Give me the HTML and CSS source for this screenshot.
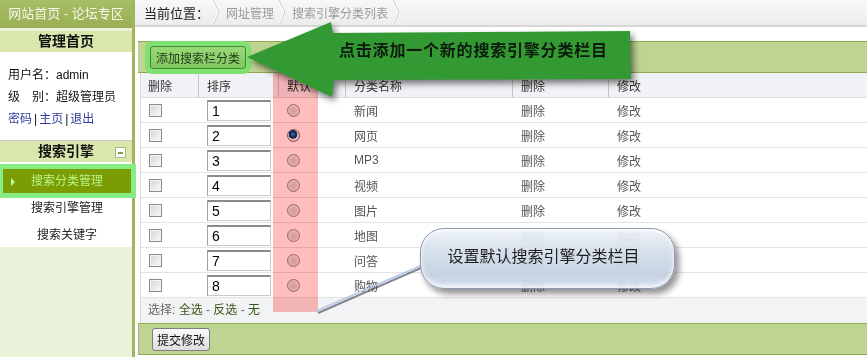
FILE: index.html
```html
<!DOCTYPE html>
<html lang="zh-CN">
<head>
<meta charset="utf-8">
<title>搜索引擎分类列表</title>
<link rel="stylesheet" href="styles.css">
</head>
<body>
<div class="page">
  <aside class="sidebar">
    <div class="site-top">网站首页 - 论坛专区</div>
    <section class="box">
      <div class="box-title">管理首页</div>
      <div class="user">
        <p>用户名：admin</p>
        <p>级　别：超级管理员</p>
        <p><a class="ulink">密码</a>|<a class="ulink">主页</a>|<a class="ulink">退出</a></p>
      </div>
    </section>
    <section class="box menu">
      <div class="box-title">搜索引擎<span class="toggle"></span></div>
      <ul class="menu-list">
        <li class="active">搜索分类管理</li>
        <li>搜索引擎管理</li>
        <li>搜索关键字</li>
      </ul>
    </section>
  </aside>

  <main class="main">
    <nav class="crumbs">
      <span class="crumb-label">当前位置：</span>
      <svg class="chev" width="8" height="25" viewBox="0 0 8 25"><polyline points="1,0 7,12.5 1,25" fill="none" stroke="#c9c9c9" stroke-width="1"/><polyline points="0,0 6,12.5 0,25" fill="none" stroke="#ffffff" stroke-width="1"/></svg>
      <span class="crumb">网址管理</span>
      <svg class="chev" width="8" height="25" viewBox="0 0 8 25"><polyline points="1,0 7,12.5 1,25" fill="none" stroke="#c9c9c9" stroke-width="1"/><polyline points="0,0 6,12.5 0,25" fill="none" stroke="#ffffff" stroke-width="1"/></svg>
      <span class="crumb">搜索引擎分类列表</span>
      <svg class="chev" width="8" height="25" viewBox="0 0 8 25"><polyline points="1,0 7,12.5 1,25" fill="none" stroke="#c9c9c9" stroke-width="1"/><polyline points="0,0 6,12.5 0,25" fill="none" stroke="#ffffff" stroke-width="1"/></svg>
    </nav>

    <div class="content">
      <div class="toolbar top-bar">
        <button class="btn-add">添加搜索栏分类</button>
      </div>

      <div class="grid">
        <div class="row head">
          <div class="cell">删除</div>
          <div class="cell">排序</div>
          <div class="cell">默认</div>
          <div class="cell">分类名称</div>
          <div class="cell">删除</div>
          <div class="cell">修改</div>
        </div>
        <div class="row"><div class="cell"><span class="cb"></span></div><div class="cell"><span class="num">1</span></div><div class="cell"><span class="radio"></span></div><div class="cell">新闻</div><div class="cell">删除</div><div class="cell">修改</div></div>
        <div class="row"><div class="cell"><span class="cb"></span></div><div class="cell"><span class="num">2</span></div><div class="cell"><span class="radio on"></span></div><div class="cell">网页</div><div class="cell">删除</div><div class="cell">修改</div></div>
        <div class="row"><div class="cell"><span class="cb"></span></div><div class="cell"><span class="num">3</span></div><div class="cell"><span class="radio"></span></div><div class="cell">MP3</div><div class="cell">删除</div><div class="cell">修改</div></div>
        <div class="row"><div class="cell"><span class="cb"></span></div><div class="cell"><span class="num">4</span></div><div class="cell"><span class="radio"></span></div><div class="cell">视频</div><div class="cell">删除</div><div class="cell">修改</div></div>
        <div class="row"><div class="cell"><span class="cb"></span></div><div class="cell"><span class="num">5</span></div><div class="cell"><span class="radio"></span></div><div class="cell">图片</div><div class="cell">删除</div><div class="cell">修改</div></div>
        <div class="row"><div class="cell"><span class="cb"></span></div><div class="cell"><span class="num">6</span></div><div class="cell"><span class="radio"></span></div><div class="cell">地图</div><div class="cell">删除</div><div class="cell">修改</div></div>
        <div class="row"><div class="cell"><span class="cb"></span></div><div class="cell"><span class="num">7</span></div><div class="cell"><span class="radio"></span></div><div class="cell">问答</div><div class="cell">删除</div><div class="cell">修改</div></div>
        <div class="row"><div class="cell"><span class="cb"></span></div><div class="cell"><span class="num">8</span></div><div class="cell"><span class="radio"></span></div><div class="cell">购物</div><div class="cell">删除</div><div class="cell">修改</div></div>
        <div class="select-row">选择: <a class="sel">全选</a> - <a class="sel">反选</a> - <a class="sel">无</a></div>
      </div>

      <div class="toolbar bottom-bar">
        <button class="btn-submit">提交修改</button>
      </div>
    </div>
  </main>

  <!-- annotations drawn over the page -->
  <div class="hl-column"></div>
  <svg class="annot" width="867" height="357" viewBox="0 0 867 357">
    <polygon class="arrow" points="247,57 331,22 333,33 630,31 631,79 334,80 332,97"/>
    <line class="pointer-shadow" x1="421" y1="268" x2="318" y2="313"/>
    <line class="pointer" x1="420" y1="266" x2="316" y2="311"/>
  </svg>
  <div class="arrow-text">点击添加一个新的搜索引擎分类栏目</div>
  <div class="bubble">设置默认搜索引擎分类栏目</div>
</div>
</body>
</html>
```

FILE: styles.css
```css
* { box-sizing: border-box; }

body {
  margin: 0;
  font-family: "Liberation Sans", "Noto Sans CJK SC", sans-serif;
  font-size: 12px;
  color: #333;
  background: #fff;
}

.page {
  position: relative;
  display: flex;
  width: 867px;
  height: 357px;
  overflow: hidden;
}

/* ---------- sidebar ---------- */
.sidebar {
  width: 135px;
  flex: none;
  background: #eaf2da;
  border-right: 3px solid #a2b55c;
}

.site-top {
  height: 28px;
  line-height: 28px;
  background: linear-gradient(#a8be68, #98b052);
  color: #f4f8ea;
  font-size: 13px;
  text-align: center;
}

.box-title {
  position: relative;
  height: 21px;
  line-height: 21px;
  background: #d9e7ad;
  color: #111;
  font-size: 14px;
  font-weight: bold;
  text-align: center;
}

.box:first-of-type .box-title { margin-top: 3px; }

.user {
  background: #fff;
  padding: 12px 0 10px 8px;
  line-height: 22px;
  font-size: 12px;
  color: #111;
  border-bottom: 1px solid #c9cfbd;
}

.user p { margin: 0; }

.ulink { color: #2f3b9a; margin: 0 2px; }
.ulink:first-child { margin-left: 0; }

.toggle {
  position: absolute;
  right: 6px;
  top: 6px;
  width: 11px;
  height: 11px;
  background: #fff;
  border: 1px solid #a9b983;
}
.toggle::after {
  content: "";
  position: absolute;
  left: 2px;
  right: 2px;
  top: 4px;
  height: 2px;
  background: #7f9f3a;
}

.menu-list {
  list-style: none;
  margin: 0;
  padding: 7px 0 0;
  background: #fff;
}

.menu-list li {
  height: 24px;
  line-height: 24px;
  margin: 0 1px 3px 3px;
  text-align: center;
  font-size: 12px;
  color: #222;
}

.menu-list li.active {
  position: relative;
  background: #7b9c02;
  color: #b6f58a;
  box-shadow: 0 0 0 5px #86ec86;
}
.menu-list li.active::before {
  content: "";
  position: absolute;
  left: 8px;
  top: 9px;
  border-left: 4px solid #b8ffb0;
  border-top: 4px solid transparent;
  border-bottom: 4px solid transparent;
}

/* ---------- main ---------- */
.main {
  flex: 1;
  min-width: 0;
  background: #fff;
}

.crumbs {
  display: flex;
  align-items: center;
  height: 27px;
  padding-left: 9px;
  background: linear-gradient(#f8f8f8, #ececec);
  border-bottom: 2px solid #d6d6d6;
}

.crumb-label { font-size: 13px; color: #222; margin-right: 2px; }
.chev { display: block; margin: 0 6px 0 1px; }
.crumb { font-size: 12px; color: #9a9a9a; margin-right: 3px; }

.content { padding: 14px 0 0 3px; }

.toolbar {
  display: flex;
  align-items: center;
  height: 32px;
  background: #bfd392;
  border-top: 1px solid #8dab52;
  border-bottom: 1px solid #8dab52;
}

.top-bar { padding-left: 12px; }
.bottom-bar { padding-left: 13px; border-left: 1px solid #a7ad9c; }

.btn-add {
  height: 23px;
  padding: 0 5px;
  font-family: inherit;
  font-size: 12px;
  color: #1d3b1a;
  background: linear-gradient(#9ad877, #82c760);
  border: 1px solid #3c8c33;
  border-radius: 3px;
  box-shadow: 0 0 0 5px #80e070;
}

.btn-submit {
  height: 23px;
  padding: 0 4px;
  font-family: inherit;
  font-size: 12px;
  color: #111;
  background: linear-gradient(#fafafa, #dedede);
  border: 1px solid #7d7d7d;
  border-radius: 3px;
}

/* ---------- list grid ---------- */
.grid {
  margin-left: 2px;
  border-left: 1px solid #dcdcdc;
}

.row {
  display: grid;
  grid-template-columns: 57px 80px 67px 167px 96px 1fr;
  height: 25px;
  border-bottom: 1px solid #e3e3e3;
  color: #555;
}

.row.head {
  background: #f0f2f5;
  color: #333;
  font-size: 12px;
  border-bottom-color: #dedede;
}

.cell {
  display: flex;
  align-items: center;
  padding-left: 8px;
  border-left: 1px solid transparent;
  white-space: nowrap;
}
.cell:first-child { border-left: 0; }
.row.head .cell { border-left-color: #c4c4c4; }
.row.head .cell:first-child { padding-left: 7px; }

.cb {
  display: block;
  width: 13px;
  height: 13px;
  border: 1px solid #8c8c8c;
  background: linear-gradient(135deg, #d4d4d4, #fbfbfb);
  box-shadow: inset 0 0 0 1px #f3f3f3;
}

.num {
  display: block;
  width: 64px;
  height: 21px;
  line-height: 18px;
  padding-left: 4px;
  font-family: "Liberation Sans", sans-serif;
  font-size: 14px;
  color: #000;
  background: #fff;
  border: 1px solid #c9c9c9;
  border-top: 2px solid #8a8a8a;
  border-left-color: #a0a0a0;
}

.radio {
  display: block;
  width: 13px;
  height: 13px;
  border-radius: 50%;
  border: 1px solid #8f8f8f;
  background: radial-gradient(circle at 50% 55%, #cfcfcf 0, #e4e4e4 55%, #f6f6f6 100%);
}
.radio.on {
  border-color: #6d6d6d;
  background: radial-gradient(circle at 45% 40%, #6da0e0 0, #1b4f9a 2px, #0c2c66 4px, #e8e8e8 4.5px, #f5f5f5 100%);
}

.select-row {
  height: 25px;
  line-height: 25px;
  padding-left: 7px;
  background: #f2f3f5;
  color: #666;
}
.sel { color: #3a5418; }

/* ---------- annotations ---------- */
.hl-column {
  position: absolute;
  left: 273px;
  top: 73px;
  width: 45px;
  height: 239px;
  background: #ffbdbd;
  mix-blend-mode: multiply;
}

.annot {
  position: absolute;
  left: 0;
  top: 0;
  pointer-events: none;
}

.arrow {
  fill: #339933;
  filter: drop-shadow(3px 4px 3px rgba(0, 0, 0, 0.5));
}

.pointer { stroke: #b3c9e6; stroke-width: 1.6; }
.pointer-shadow { stroke: rgba(40, 40, 60, 0.55); stroke-width: 2; }

.arrow-text {
  position: absolute;
  left: 339px;
  top: 40px;
  height: 22px;
  line-height: 22px;
  font-size: 16px;
  font-weight: bold;
  letter-spacing: 0.8px;
  color: #0d1a0d;
}

.bubble {
  position: absolute;
  left: 420px;
  top: 228px;
  width: 255px;
  height: 61px;
  padding-right: 8px;
  line-height: 56px;
  text-align: center;
  font-size: 16px;
  color: #111;
  border: 1px solid #8494ab;
  border-radius: 24px;
  background: linear-gradient(#eef3f9 0%, #d6e0ec 35%, #c3d0e1 80%, #d4dff0 100%);
  box-shadow: 4px 5px 6px rgba(0, 0, 0, 0.45), inset 0 2px 3px rgba(255, 255, 255, 0.9), inset 0 -3px 4px rgba(255, 255, 255, 0.7);
  opacity: 0.94;
}
```
